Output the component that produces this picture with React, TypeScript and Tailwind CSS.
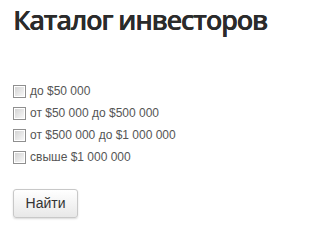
const ranges = [
  'до $50 000',
  'от $50 000 до $500 000',
  'от $500 000 до $1 000 000',
  'свыше $1 000 000',
]

const Box = () => (
  <span className="flex h-[13px] w-[13px] shrink-0 items-center justify-center border border-[#8f8f8f] bg-white">
    <span className="h-[9px] w-[9px] bg-gradient-to-br from-[#d4d4d4] to-[#f7f7f7]" />
  </span>
)

export default function App() {
  return (
    <div className="min-h-[230px] w-[328px] bg-white pl-[13px] pt-px">
      <h1 className="font-['Open_Sans',sans-serif] text-[27px] font-semibold leading-[38px] tracking-[-1.2px] text-[#2b2b2b] [text-shadow:0.3px_0_0_#2b2b2b]">
        Каталог инвесторов
      </h1>
      <form className="mt-[41px] font-['Liberation_Sans',Arial,sans-serif] text-[12px] text-[#555]">
        <ul>
          {ranges.map((r) => (
            <li key={r}>
              <label className="flex h-[22px] items-center gap-[4px]">
                <Box />
                <span>{r}</span>
              </label>
            </li>
          ))}
        </ul>
        <button
          type="button"
          className="mt-[21px] h-[29px] w-[65px] rounded-[3px] border border-[#c8c8c8] bg-gradient-to-b from-white to-[#e8e8e8] text-[14px] font-normal text-[#333] shadow-[0_1px_2px_rgba(0,0,0,0.15)]"
        >
          Найти
        </button>
      </form>
    </div>
  )
}
